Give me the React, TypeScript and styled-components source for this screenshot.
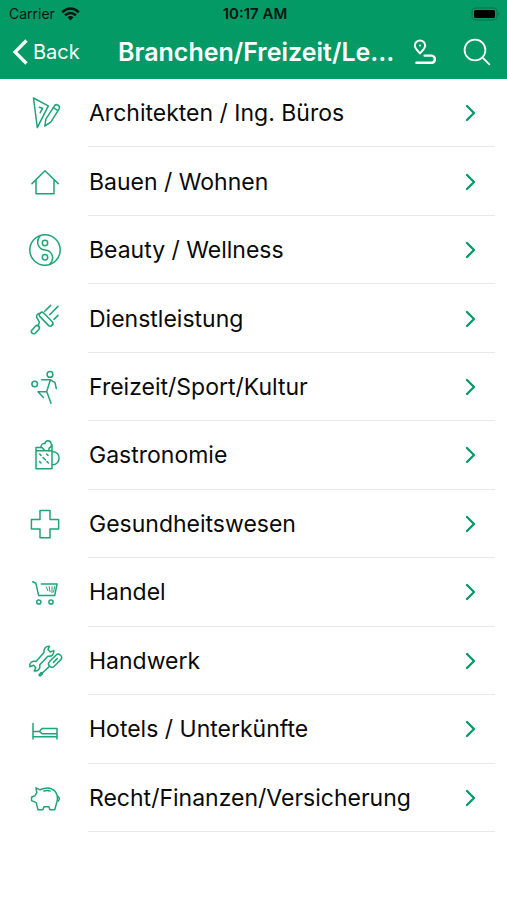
import React from 'react';
import styled, { createGlobalStyle } from 'styled-components';

const GREEN = '#039a66';

const GlobalStyle = createGlobalStyle`
  * { box-sizing: border-box; }
  body {
    margin: 0;
    background: #fff;
    color: #0a0a0a;
    font-family: Inter, "Liberation Sans", sans-serif;
  }
`;

const Screen = styled.div`
  display: flex;
  flex-direction: column;
  min-height: 100vh;
`;

const Header = styled.header`
  background: ${GREEN};
  color: #fff;
`;

const StatusBar = styled.div`
  display: grid;
  grid-template-columns: 1fr auto 1fr;
  align-items: center;
  height: 27px;
  padding: 0 6px 0 9px;
  color: #06160f;
  font-size: 14px;
`;

const Carrier = styled.div`
  display: flex;
  align-items: center;
  gap: 6px;
`;

const Clock = styled.time`
  font-size: 15px;
  font-weight: 600;
`;

const Battery = styled.svg`
  justify-self: end;
`;

const NavBar = styled.nav`
  display: flex;
  align-items: center;
  height: 52px;
  padding: 0 16px 2px 12px;
`;

const BackButton = styled.button`
  display: flex;
  align-items: center;
  gap: 5px;
  width: 106px;
  padding: 0;
  border: 0;
  background: none;
  color: inherit;
  font: inherit;
  font-size: 20px;
`;

const Title = styled.h1`
  flex: 1;
  min-width: 0;
  margin: 0;
  overflow: hidden;
  font-size: 25px;
  line-height: 32px;
  font-weight: 600;
  white-space: nowrap;
`;

const Actions = styled.div`
  display: flex;
  align-items: center;
  gap: 26px;
`;

const IconButton = styled.button`
  display: flex;
  padding: 0;
  border: 0;
  background: none;
  color: inherit;
`;

const List = styled.ul`
  display: flex;
  flex: 1;
  flex-direction: column;
  margin: 0;
  padding: 0 12px 68px 27px;
  list-style: none;
`;

const Row = styled.li`
  display: flex;
  flex: 1;
  min-height: 56px;
`;

const RowLink = styled.a`
  display: flex;
  flex: 1;
  align-items: center;
  gap: 25px;
  color: inherit;
  text-decoration: none;
`;

const RowBody = styled.span`
  display: flex;
  flex: 1;
  align-self: stretch;
  align-items: center;
  justify-content: space-between;
  padding: 1px 18px 0 1px;
  border-bottom: 1px solid #e9e9ec;
`;

const Label = styled.span`
  font-size: 23px;
  line-height: 30px;
`;

const CategoryIcon = styled.svg`
  flex: none;
  fill: none;
  stroke: #1fa475;
  stroke-width: 1.5;
  stroke-linecap: round;
  stroke-linejoin: round;
`;

const Chevron = styled.svg`
  flex: none;
  fill: none;
  stroke: ${GREEN};
  stroke-width: 2.3;
  stroke-linecap: round;
  stroke-linejoin: round;
`;

const categories: { label: string; icon: React.ReactNode }[] = [
  {
    label: 'Architekten / Ing. Büros',
    icon: (
      <>
        <path d="M6.5 3 21.3 10.8 10.3 32.6Z" />
        <path d="M12.3 12.2 15.6 13.3 13.2 17.6" />
        <path d="M17.8 31 19 23.8 27.6 10.6Q29 8.9 31 10.2T32.3 13.6L23.8 27.2ZM26.4 12.6 31 15.6" />
      </>
    ),
  },
  {
    label: 'Bauen / Wohnen',
    icon: <path d="M5 19.6 18 6.8 31.2 19.6M9 16V29.8H27V16" />,
  },
  {
    label: 'Beauty / Wellness',
    icon: (
      <>
        <circle cx="18" cy="18" r="15.2" />
        <path d="M13.2 3.7C8 10 11.5 17.6 18 18S28.6 26 22.8 32.3" />
        <circle cx="18" cy="11" r="2.7" />
        <circle cx="18" cy="25.2" r="2.7" />
      </>
    ),
  },
  {
    label: 'Dienstleistung',
    icon: (
      <>
        <path d="M17.7 10.2 23.7 4.4M22.7 13.8 31 5.4M27 18.4 31 14.4" />
        <rect x="10.6" y="15.6" width="17" height="5.2" rx="2.4" transform="rotate(46 19.1 18.2)" />
        <path d="M13.4 12.2Q9.2 12.6 9.6 16.2L12.3 21.2 11.2 25.4M24.5 24.5 26 23" />
        <rect x="3.6" y="26.4" width="9.6" height="4.6" rx="2.3" transform="rotate(-48 8.4 28.7)" />
      </>
    ),
  },
  {
    label: 'Freizeit/Sport/Kultur',
    icon: (
      <>
        <circle cx="23" cy="5.4" r="2.9" />
        <circle cx="7.7" cy="15" r="2.8" />
        <path d="M14.7 10.8H23.4L28 13.7 29.3 19.5M23.4 10.8 19.7 22.4 24 34.2M19.7 22.4 11 22.8 16.4 28.4" />
      </>
    ),
  },
  {
    label: 'Gastronomie',
    icon: (
      <>
        <path d="M9 10.6V31.8H25V13.8H9M9 10.6H15L18 13.8M25 13.8V8" />
        <path d="M14 10.4C13.8 7 16.4 6 18 6.6 18.4 3 23.4 2.8 24 6.2 25.4 8 24 10.6 22 11.2V13.8" />
        <path d="M25.2 14.4C34.4 14.6 34.4 27.6 25.2 27.8" />
        <path d="M12.6 17 14 18.4M19.6 17 21 18.4M16 20.6 18.4 22.8M12.6 24.6 14 26M20 24.6 21.4 26" />
      </>
    ),
  },
  {
    label: 'Gesundheitswesen',
    icon: <path d="M13 4.6H23V13.4H31.6V23H23V31.8H13V23H4.4V13.4H13Z" />,
  },
  {
    label: 'Handel',
    icon: (
      <>
        <path d="M5.7 7.8 8.8 9.2 11.7 21.6H27.7L30 10.1H14.4" />
        <path d="M19.4 13 20.8 16.6M22.2 12.6 23 17.6M25 12.6V18.6M27.6 12.6 26.6 18" strokeWidth="1" />
        <circle cx="11.8" cy="28" r="2.1" />
        <circle cx="24" cy="28" r="2.1" />
      </>
    ),
  },
  {
    label: 'Handwerk',
    icon: (
      <>
        <path d="M9 18.4 17 9.6C16.2 6 18.8 2.8 22.4 3.2L21 6.6 23.2 9 26.8 7.6C27.4 11.4 24.4 14 20.8 13.2L12.8 21.8C13.6 25.4 11 28.4 7.2 28L8.8 24.8 6.6 22.2 2.8 23.8C2 20 5.2 17.4 9 18.4Z" />
        <rect x="20.4" y="14.4" width="15.4" height="6.6" rx="3.2" transform="rotate(-45 28.1 17.7)" />
        <path d="M22.4 23.4 14 31.2M26.4 19.4 30.2 15.6" />
        <path d="M14.2 29.6 15.6 31 13 33 12 32Z" />
      </>
    ),
  },
  {
    label: 'Hotels / Unterkünfte',
    icon: <path d="M6 12.6V28M30 17.4V28M6 25.8H30M6 20.4H12.4L15 17.4H30M12.4 20.4 15 22.8H30" />,
  },
  {
    label: 'Recht/Finanzen/Versicherung',
    icon: (
      <>
        <path d="M9 7.8 13 9.8Q22.6 5.4 28 11.2 31.6 15.6 30 21.6L27.7 29.8H23L21.8 26.8H17L15.8 29.8H11L9.2 22.6 4.6 20.6V17.2L8 15.6 9.8 12.6Z" />
        <path d="M17 11Q20 10 23 11M31 16.4Q33.4 18 31.4 21" />
      </>
    ),
  },
];

export default function App() {
  return (
    <Screen>
      <GlobalStyle />
      <Header>
        <StatusBar>
          <Carrier>
            Carrier
            <svg width="19" height="14" viewBox="0 0 19 14" fill="none" stroke="currentColor" strokeWidth="2.5" aria-label="Wi-Fi">
              <path d="M1.2 5.2Q9.5-2.2 17.8 5.2M4.1 8.3Q9.5 3.6 14.9 8.3" />
              <path d="M6.4 10.3Q9.5 7.7 12.6 10.3L9.5 13.6Z" fill="currentColor" stroke="none" />
            </svg>
          </Carrier>
          <Clock>10:17 AM</Clock>
          <Battery width="30" height="14" viewBox="0 0 30 14" aria-label="Battery">
            <rect x="1" y="1" width="25" height="12" rx="3.5" fill="none" stroke="#087349" />
            <rect x="3" y="3" width="21" height="8" rx="1.5" fill="#000" />
            <path d="M27.5 5v4q2-2 0-4" fill="#087349" />
          </Battery>
        </StatusBar>
        <NavBar>
          <BackButton type="button">
            <svg width="16" height="26" viewBox="0 0 16 26" fill="none" stroke="currentColor" strokeWidth="3.2" aria-hidden="true">
              <path d="M14.5 1.5 3 13 14.5 24.5" />
            </svg>
            Back
          </BackButton>
          <Title>Branchen/Freizeit/Le...</Title>
          <Actions>
            <IconButton type="button" aria-label="Route">
              <svg width="24" height="26" viewBox="0 0 24 26" fill="none" stroke="currentColor" strokeWidth="2" strokeLinecap="round" strokeLinejoin="round">
                <path d="M7 14.4Q1.8 9.4 1.8 6.6A5.2 5.2 0 0 1 12.2 6.6Q12.2 9.4 7 14.4Z" />
                <circle cx="7" cy="6.6" r="1" fill="currentColor" stroke="none" />
                <path d="M11.6 16.6H19A3.7 3.7 0 0 1 19 23.8H3.4" strokeWidth="2.4" />
              </svg>
            </IconButton>
            <IconButton type="button" aria-label="Search">
              <svg width="28" height="28" viewBox="0 0 28 28" fill="none" stroke="currentColor" strokeWidth="1.8" strokeLinecap="round">
                <circle cx="12" cy="12" r="10.4" />
                <path d="M19.6 19.6 26.4 26.4" />
              </svg>
            </IconButton>
          </Actions>
        </NavBar>
      </Header>
      <List>
        {categories.map(({ label, icon }) => (
          <Row key={label}>
            <RowLink href="#">
              <CategoryIcon width="36" height="36" viewBox="0 0 36 36" aria-hidden="true">
                {icon}
              </CategoryIcon>
              <RowBody>
                <Label>{label}</Label>
                <Chevron width="12" height="18" viewBox="0 0 12 18" aria-hidden="true">
                  <path d="M2 2 9 9 2 16" />
                </Chevron>
              </RowBody>
            </RowLink>
          </Row>
        ))}
      </List>
    </Screen>
  );
}
